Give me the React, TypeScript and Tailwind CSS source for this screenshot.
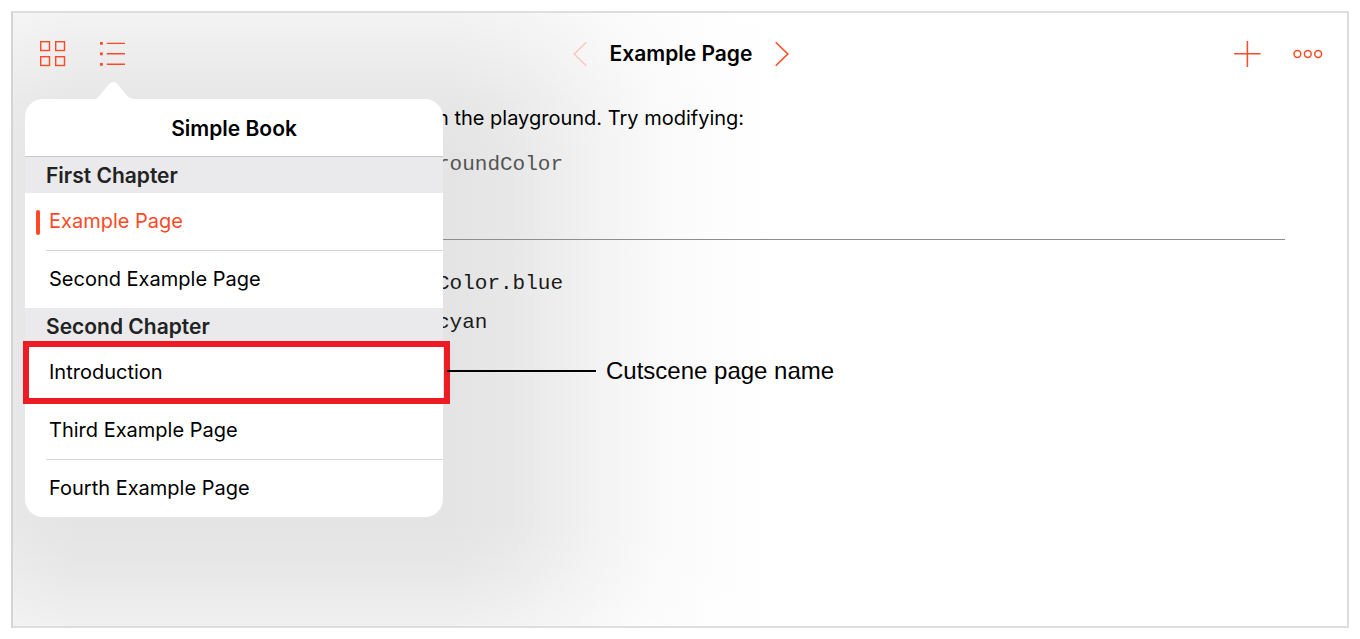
import type { ReactNode } from "react";

type Page = { name: string; current?: boolean; callout?: string };
type Chapter = { title: string; pages: Page[] };

const chapters: Chapter[] = [
  {
    title: "First Chapter",
    pages: [{ name: "Example Page", current: true }, { name: "Second Example Page" }],
  },
  {
    title: "Second Chapter",
    pages: [
      { name: "Introduction", callout: "Cutscene page name" },
      { name: "Third Example Page" },
      { name: "Fourth Example Page" },
    ],
  },
];

function IconButton({ label, disabled, children }: { label: string; disabled?: boolean; children: ReactNode }) {
  return (
    <button type="button" aria-label={label} disabled={disabled} className="text-[#fc4a26] disabled:text-[#fbc9be]">
      {children}
    </button>
  );
}

function GridIcon() {
  return (
    <svg width="28" height="28" viewBox="0 0 28 28" fill="none" stroke="currentColor" strokeWidth="1.4">
      <rect x="1.7" y="1.7" width="8.8" height="8.8" />
      <rect x="16.7" y="1.7" width="8.8" height="8.8" />
      <rect x="1.7" y="16.7" width="8.8" height="8.8" />
      <rect x="16.7" y="16.7" width="8.8" height="8.8" />
    </svg>
  );
}

function ListIcon() {
  return (
    <svg width="28" height="28" viewBox="0 0 28 28" fill="currentColor">
      <path d="M1 2h2.8v2.8H1zM1 12.4h2.8v2.8H1zM1 22.9h2.8v2.8H1z" />
      <path d="M7.8 2.7H26v1.4H7.8zM7.8 13.1H26v1.4H7.8zM7.8 23.5H26v1.4H7.8z" />
    </svg>
  );
}

function ChevronIcon({ flip }: { flip?: boolean }) {
  return (
    <svg width="16" height="28" viewBox="0 0 16 28" fill="none" stroke="currentColor" strokeWidth="1.6">
      <path d={flip ? "M14.3 2.2 2.2 14l12.1 11.8" : "M1.7 2.2 13.8 14 1.7 25.8"} />
    </svg>
  );
}

function Toolbar() {
  return (
    <header className="grid h-[82px] grid-cols-[1fr_auto_1fr] items-center pr-6 pl-[26px]">
      <div className="flex items-center gap-8">
        <IconButton label="My Playgrounds"><GridIcon /></IconButton>
        <IconButton label="Table of contents"><ListIcon /></IconButton>
      </div>
      <div className="flex items-center gap-[22px]">
        <IconButton label="Previous page" disabled><ChevronIcon flip /></IconButton>
        <h1 className="text-[21px] leading-7 font-semibold">Example Page</h1>
        <IconButton label="Next page"><ChevronIcon /></IconButton>
      </div>
      <div className="flex items-center justify-end gap-8">
        <IconButton label="Add">
          <svg width="28" height="28" viewBox="0 0 28 28" fill="none" stroke="currentColor" strokeWidth="1.5">
            <path d="M14.4 1v26M1.2 13.7h26.4" />
          </svg>
        </IconButton>
        <IconButton label="More">
          <svg width="30" height="28" viewBox="0 0 30 28" fill="none" stroke="currentColor" strokeWidth="1.5">
            <circle cx="4.4" cy="14" r="3.4" />
            <circle cx="14.8" cy="14" r="3.4" />
            <circle cx="25.2" cy="14" r="3.4" />
          </svg>
        </IconButton>
      </div>
    </header>
  );
}

function PlaygroundText() {
  return (
    <main className="px-[62px]">
      <div className="pl-[362px]">
        <p className="pt-[7px] text-[20px] leading-8">n the playground. Try modifying:</p>
        <p className="pt-[15px] font-['Liberation_Mono',monospace] text-[21px] leading-8 text-[#555]">roundColor</p>
      </div>
      <hr className="mt-[58px] border-[#8e8e8e]" />
      <div className="pt-6 pl-[362px] font-['Liberation_Mono',monospace] text-[21px] leading-[39px] text-[#1a1a1a]">
        <p>Color.blue</p>
        <p>cyan</p>
      </div>
    </main>
  );
}

function Callout({ text }: { text: string }) {
  return (
    <>
      <span className="pointer-events-none absolute -top-[3px] -right-[7px] -bottom-[2px] -left-[2px] border-6 border-[#ed1c24]" />
      <span className="absolute top-0 left-full ml-1 flex h-[54px] items-center gap-[10px] whitespace-nowrap">
        <span className="h-[2px] w-[149px] bg-black" />
        <span className="font-['Liberation_Sans',Arial,sans-serif] text-[24px] leading-8">{text}</span>
      </span>
    </>
  );
}

function PageRow({ page, divided }: { page: Page; divided: boolean }) {
  return (
    <li className="relative">
      <button type="button" aria-current={page.current ? "page" : undefined} className="flex w-full items-center pl-[11px] text-left">
        <span className={page.current ? "h-[25px] w-1 rounded-xs bg-[#fc4a26]" : "h-[25px] w-1"} />
        <span
          className={
            (divided ? "border-b border-[#d6d6d8] " : "") +
            (page.current ? "text-[#fc4a26] " : "text-black ") +
            "ml-[6px] flex-1 py-[14px] pl-[3px] text-[20px] leading-[29px]"
          }
        >
          {page.name}
        </span>
      </button>
      {page.callout && <Callout text={page.callout} />}
    </li>
  );
}

function ContentsPopover() {
  return (
    <nav aria-label="Simple Book" className="absolute top-[86px] left-3 w-[418px] rounded-[18px] bg-white">
      <svg className="absolute -top-[17px] left-[66px]" width="46" height="18" viewBox="0 0 46 18" fill="#fff">
        <path d="M0 18v-.5c5 0 7-2 9.500-5L17.500 2.800c3-3.700 6.500-3.700 9.500 0l8 9.700c2.500 3 5 4.500 9 4.500v1z" />
      </svg>
      <h2 className="border-b border-[#c8c8cc] pt-[15px] pb-[13px] text-center text-[21px] leading-[29px] font-semibold">
        Simple Book
      </h2>
      {chapters.map((chapter) => (
        <section key={chapter.title}>
          <h3 className="bg-[#eaeaec] px-[21px] pt-[5px] pb-[3px] text-[21px] leading-7 font-semibold text-[#222]">
            {chapter.title}
          </h3>
          <ul>
            {chapter.pages.map((page, i) => (
              <PageRow key={page.name} page={page} divided={i < chapter.pages.length - 1} />
            ))}
          </ul>
        </section>
      ))}
    </nav>
  );
}

/* Wide, soft shade that the popover casts over the page behind it. */
function PopoverShade() {
  return (
    <div className="pointer-events-none absolute inset-y-0 left-0 -z-10 w-[780px] bg-[linear-gradient(180deg,rgba(255,255,255,0.55)_0px,rgba(255,255,255,0.35)_40px,rgba(255,255,255,0.1)_90px,transparent_150px,transparent_83%,rgba(255,255,255,0.15)_91%,rgba(255,255,255,0.45)_100%),linear-gradient(90deg,#e8e8e8_0px,#e4e4e4_60px,#e4e4e4_440px,#e8e8e8_500px,#eeeeee_550px,#f4f4f4_595px,#f9f9f9_640px,#fdfdfd_700px,#ffffff_770px)]" />
  );
}

export default function App() {
  return (
    <div className="flex min-h-screen bg-white p-[11px] font-['Inter',sans-serif] text-black">
      <div className="relative isolate flex-1 overflow-hidden border-2 border-[#dedede] border-l-[#d4d4d4]">
        <PopoverShade />
        <Toolbar />
        <PlaygroundText />
        <ContentsPopover />
      </div>
    </div>
  );
}
